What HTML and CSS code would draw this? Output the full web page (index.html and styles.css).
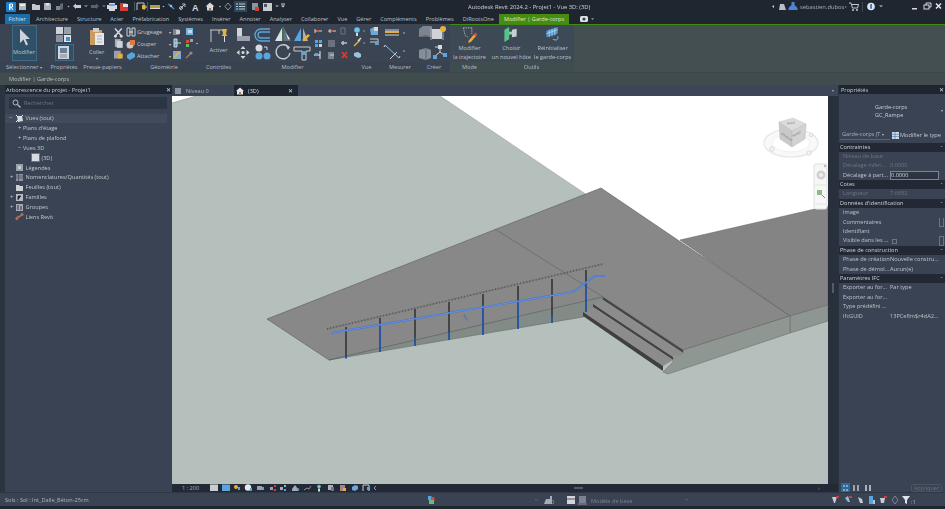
FILE: index.html
```html
<!DOCTYPE html>
<html lang="fr">
<head>
<meta charset="utf-8">
<title>Autodesk Revit 2024.2</title>
<link rel="stylesheet" href="styles.css">
</head>
<body>
<div class="app">
  <header class="titlebar">
    <svg class="qa" viewBox="0 0 300 14" width="300" height="14">
      <rect x="6" y="2" width="10" height="10" rx="1" fill="#1a7fd0"/><rect x="9" y="4" width="1.5" height="6" fill="#fff"/><path d="M10 4h2.5v3H10M11 7l2 3" stroke="#fff" fill="none"/>
      <rect x="19" y="3" width="7" height="7" fill="#aeb5bd"/><rect x="20" y="4" width="5" height="2" fill="#e8ebee"/>
      <path d="M32 4h3l1 1h4v5h-8z" fill="#c3c8cd"/>
      <path d="M44 3h6l1 1v6h-7z" fill="#aab0b8"/><rect x="46" y="3" width="3" height="2.5" fill="#e2e5e8"/>
      <path d="M56 6h4v4h-4z" fill="#7e858e"/><path d="M60 4l3-1v6l-3 1z" fill="#636a74"/><circle cx="68.500" cy="6.500" r=".8" fill="#bbb"/>
      <path d="M73 6l3-2.500v1.500h5v3h-5v1z" fill="#c8ccd2"/><path d="M84 5.500l2 1.500 2-1.500z" fill="#aab"/>
      <path d="M99 6l-3-2.500v1.500h-5v3h5v1z" fill="#596170"/><path d="M102 5.500l2 1.500 2-1.500z" fill="#889"/>
      <path d="M109 3h6v2h2v4h-2v2h-6v-2h-2v-4h2z" fill="#d5d9de"/><rect x="109" y="4" width="6" height="2" fill="#6aa9d8"/>
      <path d="M120 3h6l2 2v6h-8z" fill="#d33e34"/><path d="M123 4h5v3h-5z" fill="#e4e7ea"/>
      <path d="M134.500 2v9" stroke="#4b5462"/>
      <path d="M137 3h7M137 3v7M144 3v7M143 6h3v2h-3z" stroke="#bfc4ca" fill="none"/><rect x="142" y="5" width="3" height="4" fill="#e8b13a"/>
      <path d="M147.500 2v9" stroke="#4b5462"/>
      <rect x="150" y="5" width="10" height="3" fill="#b69a45"/><rect x="150" y="8" width="10" height="1" fill="#d7dbe0"/><circle cx="163.500" cy="6.500" r=".8" fill="#bbb"/>
      <path d="M168 4l3 2 3 3" stroke="#3f93d4" stroke-width="1.400" fill="none"/><circle cx="171" cy="6" r="1.200" fill="#9bc6e8"/>
      <path d="M180 9l5-5M182 4h3v3" stroke="#b5bac1" fill="none"/><circle cx="181" cy="8" r="1.500" fill="none" stroke="#b5bac1"/>
      <text x="192" y="10.500" class="qa-a">A</text>
      <path d="M205.500 6.500l4.500-4 4.500 4h-1.500v4h-6v-4z" fill="#d7dade"/><rect x="209" y="8" width="2" height="2.500" fill="#9a7a44"/><circle cx="220" cy="6.500" r=".8" fill="#bbb"/>
      <path d="M228 3l3 3.500-3 3.500-3-3.500z" fill="none" stroke="#8d949e"/>
      <rect x="234" y="1" width="13" height="11" fill="#2d475c"/><path d="M236 4h2M239 4h6M236 6.500h2M239 6.500h6M236 9h2M239 9h6" stroke="#c9ced4"/>
      <path d="M252 3h6v7h-6z" fill="#8d949e"/><rect x="255" y="7" width="4" height="4" fill="#d33e34"/>
      <rect x="263" y="3" width="9" height="8" fill="#c7ccd2"/><rect x="264" y="4" width="3" height="3" fill="#4e5664"/><path d="M275 5.500l2 1.500 2-1.500z" fill="#bbb"/>
      <path d="M281 5.500h4l-2 2z" fill="#d4d8dc"/><rect x="281" y="3.500" width="4" height="1" fill="#d4d8dc"/>
    </svg>
    <span class="app-title">Autodesk Revit 2024.2 - Projet1 - Vue 3D: (3D)</span>
    <div class="account">
      <svg viewBox="0 0 30 14" width="30" height="14"><path d="M2 6.500l2-1.500v3z" fill="#c9ced4"/><path d="M10 4h2.500v6H9zM14 4h-1.500v6H16z" fill="#b9bfc6"/><path d="M21.500 2h3v3l1 1 2 2v2h-9v-2l2-2 1-1z" fill="#4f83d8"/></svg>
      <span class="user">sebastien.dubos</span><span class="star">▾</span>
      <svg viewBox="0 0 14 14" width="14" height="14"><path d="M2 3h2l1.500 5h5l1-3.500H5" fill="none" stroke="#c3c9d0"/><circle cx="6" cy="10" r="1" fill="#c3c9d0"/><circle cx="10" cy="10" r="1" fill="#c3c9d0"/></svg>
      <svg class="help" viewBox="0 0 26 14" width="26" height="14"><path d="M.5 2v10" stroke="#3d4654"/><circle cx="9" cy="6.500" r="3.800" fill="#dfe5ec"/><rect x="8.200" y="4" width="1.700" height="4.700" fill="#2a6fb6"/><path d="M17 5.500l2 1.500 2-1.500z" fill="#c3c9d0"/></svg>
      <svg class="winctl" viewBox="0 0 40 14" width="40" height="14"><rect x="3" y="8" width="5" height="1.500" fill="#d4d8dd"/><rect x="15" y="5" width="5" height="4" fill="none" stroke="#d4d8dd"/><path d="M17 5V3h5v4h-2" fill="none" stroke="#d4d8dd"/><path d="M27 3.500l5 5M32 3.500l-5 5" stroke="#e4e7ea" stroke-width="1.500"/></svg>
    </div>
  </header>

  <nav class="tabs">
    <span class="tab tab-file">Fichier</span>
    <span class="tab">Architecture</span>
    <span class="tab">Structure</span>
    <span class="tab">Acier</span>
    <span class="tab">Préfabrication</span>
    <span class="tab">Systèmes</span>
    <span class="tab">Insérer</span>
    <span class="tab">Annoter</span>
    <span class="tab">Analyser</span>
    <span class="tab">Collaborer</span>
    <span class="tab">Vue</span>
    <span class="tab">Gérer</span>
    <span class="tab">Compléments</span>
    <span class="tab">Problèmes</span>
    <span class="tab">DiRootsOne</span>
    <span class="tab tab-context">Modifier | Garde-corps</span>
    <svg class="tab-video" viewBox="0 0 16 8" width="16" height="8"><rect x="1" y="1" width="8" height="6" rx="1.500" fill="#dfe3e8"/><circle cx="5" cy="4" r="1.600" fill="#39424f"/><path d="M12 3.500l1.500 1.200 1.500-1.200z" fill="#c9ced4"/></svg>
  </nav>

  <section class="ribbon">
    <div class="panel w-select">
      <div class="panel-body center">
        <div class="big-btn selected">
          <svg viewBox="0 0 14 20" width="14" height="20"><path d="M3 2v14l3.500-3.500 2.500 6 2-1-2.500-5.500H13z" fill="#cfd4da"/></svg>
          <span>Modifier</span>
        </div>
      </div>
      <div class="panel-label">Sélectionner <span class="caret">▾</span></div>
    </div>
    <div class="panel w-props">
      <div class="panel-body stack">
        <svg viewBox="0 0 18 17" width="18" height="17"><rect x="1" y="1" width="7" height="7" fill="#d0d4d9"/><rect x="9" y="1" width="7" height="7" fill="#9aa0a9"/><rect x="1" y="9" width="7" height="7" fill="#8e949e"/><rect x="9" y="9" width="7" height="7" fill="#e0e3e7"/><rect x="11" y="11" width="4" height="4" fill="#4a8cc0"/></svg>
        <div class="prop-btn"><svg viewBox="0 0 14 15" width="14" height="15"><rect x="1" y="1" width="11" height="13" fill="#d2d6db"/><rect x="3" y="3" width="7" height="5" fill="#6c8198"/><path d="M3 10h7M3 12h7" stroke="#7b8390"/></svg></div>
      </div>
      <div class="panel-label">Propriétés</div>
    </div>
    <div class="panel w-clip">
      <div class="panel-body clip">
        <div class="big-btn">
          <svg viewBox="0 0 18 20" width="18" height="20"><rect x="2" y="3" width="12" height="15" fill="#c99c63"/><rect x="5" y="1" width="6" height="4" fill="#c9ced4"/><path d="M7 6h9v12H7z" fill="#e5e7ea"/><path d="M9 9h5M9 12h5M9 15h5" stroke="#aab0b8"/></svg>
          <span>Coller</span>
          <span class="caret">▾</span>
        </div>
        <svg viewBox="110 24 12 38" width="12" height="38"><path d="M112 28l7 8M119 28l-7 8" stroke="#d5d9de" stroke-width="1.500"/><circle cx="112.500" cy="36" r="1.500" fill="#d5d9de"/><circle cx="118.500" cy="36" r="1.500" fill="#d5d9de"/><rect x="112" y="39" width="6" height="8" fill="#aab0b8"/><rect x="114" y="41" width="6" height="7" fill="#cfd3d8"/><rect x="111" y="51" width="7" height="8" fill="#9aa1ab"/><rect x="115" y="54" width="5" height="5" fill="#e0b040"/></svg>
      </div>
      <div class="panel-label">Presse-papiers</div>
    </div>
    <div class="panel w-geo">
      <div class="panel-body geo">
        <div class="geo-list">
          <div class="geo-row"><svg viewBox="0 0 10 10" width="10" height="10"><path d="M1 1h3v8H1zM6 1h3v8H6z" fill="none" stroke="#c8cdd3"/><path d="M3 5h4" stroke="#e3e6e9"/></svg><span>Grugeage</span><i>▾</i></div>
          <div class="geo-row"><svg viewBox="0 0 10 10" width="10" height="10"><circle cx="4" cy="6" r="3.500" fill="#c4c9cf"/><rect x="4" y="1" width="5" height="5" fill="#e07a42"/></svg><span>Couper</span><i>▾</i></div>
          <div class="geo-row"><svg viewBox="0 0 10 10" width="10" height="10"><path d="M1 4l5-3 3 2v3l-5 3-3-2z" fill="#5aa2dc"/></svg><span>Attacher</span><i>▾</i></div>
        </div>
        <svg viewBox="171 24 30 38" width="30" height="38"><rect x="173" y="29" width="6" height="6" fill="#7d8490"/><rect x="176" y="30" width="4" height="4" fill="#c9ced4"/><rect x="186" y="28" width="7" height="7" fill="#6eb6e2"/><rect x="188" y="30" width="4" height="3" fill="#cfd8df"/><path d="M174 39h3v8h-3zM174 43h7" fill="#5ba5da" stroke="#cfd4da"/><rect x="186" y="40" width="3" height="3" fill="#d94a3c"/><rect x="190" y="39" width="3" height="3" fill="#9aa2ac"/><rect x="186" y="44" width="3" height="3" fill="#5fbf60"/><circle cx="197" cy="43.500" r=".8" fill="#c0c5cb"/><rect x="173" y="51" width="8" height="8" fill="#7fa9cd"/><path d="M174 58l5-6" stroke="#e8b13a" stroke-width="1.500"/><path d="M186 58l5-5" stroke="#a6795c" stroke-width="1.500"/><circle cx="191" cy="53" r="1.500" fill="#8c9097"/></svg>
      </div>
      <div class="panel-label">Géométrie</div>
    </div>
    <div class="panel w-ctrl">
      <div class="panel-body center">
        <div class="big-btn">
          <svg viewBox="0 0 20 18" width="20" height="18"><path d="M1 3h16M2 3v12M10 3v4" stroke="#c1c6cc" fill="none"/><path d="M13 2h5l-1 5 1.500 2h-6L14 7z" fill="#e8b13a"/><path d="M15.500 9v6" stroke="#d9dcdf"/></svg>
          <span>Activer</span>
        </div>
      </div>
      <div class="panel-label">Contrôles</div>
    </div>
    <div class="panel w-mod">
      <div class="panel-body">
        <svg viewBox="234 24 117 38" width="117" height="38">
          <path d="M237 28h5v8h8v5h-13z" fill="#cfd4da"/><rect x="237" y="36" width="13" height="5" fill="#9ba2ac"/>
          <path d="M270 29h-9a6 6 0 0 0 0 12h9M270 32h-9a3 3 0 0 0 0 6h9" fill="none" stroke="#5aa6dc" stroke-width="1.300"/>
          <path d="M283 27v14" stroke="#4f9c4a"/><path d="M282 28v13h-7z" fill="#dde1e5"/><path d="M284 28v13h7z" fill="#66717f"/><path d="M286 33l4 6-2 .5z" fill="#eaecee"/>
          <path d="M301 28v13h-7z" fill="#5aa6dc"/><path d="M303 28v13h5z" fill="#a9b0ba"/><path d="M302 40l6-6 2 1.500-6 6z" fill="#e8b13a"/>
          <path d="M243 46l2.500 3h-5zM243 59l2.500-3h-5zM236.500 52.500l3-2.500v5zM249.500 52.500l-3-2.500v5z" fill="#d6dade"/><circle cx="243" cy="52.500" r="1.500" fill="#d6dade"/>
          <circle cx="259" cy="48" r="3.500" fill="#d6dade"/><circle cx="259" cy="56" r="3.500" fill="#5aa6dc"/><circle cx="267" cy="56" r="3.500" fill="#5aa6dc"/><path d="M264 47h3v3" stroke="#d6dade" fill="none"/>
          <path d="M289 48a7 7 0 1 0 1 5" fill="none" stroke="#c5cad0" stroke-width="1.400"/><path d="M286 46l4 1-2 3z" fill="#c5cad0"/>
          <path d="M294 47h16v4h-4v9h-4v-9h-8z" fill="none" stroke="#c7ccd2"/><rect x="302" y="51" width="4" height="4" fill="#5aa6dc"/>
          <path d="M315 31h7M315 29v4M328 31h8M330 31v-2M330 31v2" stroke="#cfd3d8"/><circle cx="318" cy="31" r="1.300" fill="#d94a3c"/><circle cx="332" cy="31" r="1.300" fill="#d94a3c"/><path d="M341 28h4v6h-4z" fill="none" stroke="#6d7583"/>
          <rect x="315" y="40" width="3" height="3" fill="#5aa6dc"/><rect x="319" y="40" width="3" height="3" fill="#5aa6dc"/><rect x="315" y="44" width="3" height="3" fill="#5aa6dc"/><rect x="319" y="44" width="3" height="3" fill="#cfd3d8"/><rect x="328" y="40" width="7" height="7" fill="#6a727f"/><path d="M341 43h6M343 41v4" stroke="#b9bec5" stroke-width="1.500"/>
          <path d="M314 55h6M320 51v8" stroke="#c6cbd1" stroke-width="1.300"/><rect x="315" y="53" width="3" height="3" fill="#5aa6dc"/><path d="M328 52h6v7h-6z" fill="#7a828e"/><path d="M330 55h4" stroke="#cfd3d8"/><path d="M342 52l5 6M347 52l-5 6" stroke="#e2382f" stroke-width="1.800"/>
        </svg>
      </div>
      <div class="panel-label">Modifier</div>
    </div>
    <div class="panel w-view">
      <div class="panel-body">
        <svg viewBox="351 24 31 38" width="31" height="38"><circle cx="357" cy="30" r="2.800" fill="#68c5e8"/><rect x="356" y="33" width="2" height="3" fill="#d6dade"/><circle cx="364" cy="31" r=".7" fill="#bbb"/><path d="M370 29l4-2h4v8h-7z" fill="#6aa9da"/><rect x="374" y="27" width="4" height="4" fill="#d6dade"/><path d="M354 46l6-6" stroke="#e8b13a" stroke-width="1.500"/><path d="M358 41l3-3" stroke="#d6dade" stroke-width="1.500"/><circle cx="364" cy="43" r=".7" fill="#bbb"/><path d="M370 39h8v6M370 42h5" stroke="#c6cbd1" fill="none"/><rect x="375" y="41" width="3" height="4" fill="#5aa6dc"/><path d="M354 53l4-1 3 2v3l-3 1-4-2z" fill="#9cc2df"/></svg>
      </div>
      <div class="panel-label">Vue</div>
    </div>
    <div class="panel w-meas">
      <div class="panel-body">
        <svg viewBox="382 24 36 38" width="36" height="38"><rect x="385" y="31" width="14" height="2" fill="#e0b040"/><path d="M385 30h14M385 35h14" stroke="#cfd3d8"/><circle cx="404" cy="33" r=".8" fill="#c0c5cb"/><path d="M385 45l14 13" stroke="#88bfe5"/><path d="M385 45l-1 2M399 58l1-2M390 59l7-7" stroke="#c9ced4"/><circle cx="404" cy="51" r=".8" fill="#c0c5cb"/></svg>
      </div>
      <div class="panel-label">Mesurer</div>
    </div>
    <div class="panel w-create">
      <div class="panel-body">
        <svg viewBox="418 24 32 38" width="32" height="38"><path d="M413 38v-8l4-3h9v11z" transform="translate(6 -1)" fill="#7d8490"/><path d="M419 37l6-2 4 1v1z" fill="#5f6772"/><rect x="432" y="29" width="10" height="10" fill="#cfd3d8"/><path d="M431 28v12M443 28v12" stroke="#aeb4bc"/><circle cx="443" cy="29" r="3" fill="#e8b13a"/><path d="M419 50l7-2 5 2v8l-5 2-7-2z" fill="#868d97"/><path d="M426 48v12" stroke="#5d6570"/><path d="M435 47h5M440 49v3M440 52l-5 4M440 52l5 4" stroke="#cdd2d8" fill="none"/><rect x="438" y="45" width="4" height="4" fill="#d6dade"/><rect x="433" y="55" width="4" height="4" fill="#5aa6dc"/><rect x="443" y="53" width="4" height="4" fill="#5aa6dc"/></svg>
      </div>
      <div class="panel-label">Créer</div>
    </div>
    <div class="contextual">
      <div class="panel w-mode">
        <div class="panel-body center">
          <div class="big-btn two">
            <svg viewBox="0 0 18 18" width="18" height="18"><path d="M3 2h9M12 2v7M3 2l2 8 3 2" fill="none" stroke="#aeb4bc" stroke-dasharray="1.500 1"/><path d="M9 15l6-7 2 2-6 7-3 1z" fill="#e8a83a"/><path d="M14 9l2-2 2 2-2 2z" fill="#d84a3c"/></svg>
            <span>Modifier</span><span>la trajectoire</span>
          </div>
        </div>
        <div class="panel-label">Mode</div>
      </div>
      <div class="panel w-tools">
        <div class="panel-body tools">
          <div class="big-btn two">
            <svg viewBox="0 0 18 18" width="18" height="18"><path d="M2 4l5-3v13l-5 3z" fill="#54c48a"/><rect x="7" y="6" width="3" height="3" fill="#9fd7b8"/><path d="M10 4l5-1v8l-5 1z" fill="#c9ced4"/></svg>
            <span>Choisir</span><span>un nouvel hôte</span>
          </div>
          <div class="big-btn two">
            <svg viewBox="0 0 18 18" width="18" height="18"><path d="M2 5l12-4v7L2 12z" fill="#4c94d2"/><path d="M5 4v8M8 3v8M11 2v8M2 8l12-4" stroke="#bcdcf2" stroke-width=".8"/><path d="M9 14c4 2 6 0 5-3" fill="none" stroke="#8dc5ea"/></svg>
            <span>Réinitialiser</span><span>le garde-corps</span>
          </div>
        </div>
        <div class="panel-label">Outils</div>
      </div>
      <div class="context-rest"></div>
    </div>
  </section>

  <div class="context-bar">Modifier | Garde-corps</div>

  <main class="workspace">
    <div class="gutter"></div>
    <aside class="browser">
      <div class="dock-head"><span>Arborescence du projet - Projet1</span><b class="x">✕</b></div>
      <div class="search"><svg viewBox="0 0 9 9" width="9" height="9"><circle cx="3.500" cy="3.500" r="2.500" fill="none" stroke="#b9bfc7" stroke-width="1"/><path d="M5.500 5.500l3 3" stroke="#b9bfc7" stroke-width="1.300"/></svg><span>Rechercher</span></div>
      <ul class="tree">
        <li class="row row-sel"><i class="exp">−</i><svg class="ti" viewBox="0 0 9 9"><path d="M2 2l5 0 1 5-5 1z" fill="#d6dade"/><path d="M1 1l2 2M8 1L6 3M1 8l2-2" stroke="#f0f1f3"/></svg>Vues (tout)</li>
        <li class="row lvl2"><i class="exp">+</i>Plans d'étage</li>
        <li class="row lvl2"><i class="exp">+</i>Plans de plafond</li>
        <li class="row lvl2"><i class="exp">−</i>Vues 3D</li>
        <li class="row lvl3"><svg class="ti" viewBox="0 0 9 9"><rect x="1" y="1" width="7" height="7" fill="#d8dbdf"/><rect x=".5" y=".5" width="8" height="8" fill="none" stroke="#6d7583"/></svg>(3D)</li>
        <li class="row"><i class="exp"></i><svg class="ti" viewBox="0 0 9 9"><rect x="1" y="1" width="7" height="7" fill="#9aa1ab"/><rect x="3" y="3" width="3" height="3" fill="#c6cbd1"/></svg>Légendes</li>
        <li class="row"><i class="exp">+</i><svg class="ti" viewBox="0 0 9 9"><rect x="1" y="1" width="7" height="7" fill="#8d949e"/><path d="M1 3h7M1 5h7M3.500 1v7" stroke="#39424f" stroke-width=".6"/></svg>Nomenclatures/Quantités (tout)</li>
        <li class="row"><i class="exp"></i><svg class="ti" viewBox="0 0 9 9"><path d="M1 2h3l1 1h3v5H1z" fill="#cdd1d6"/></svg>Feuilles (tout)</li>
        <li class="row"><i class="exp">+</i><svg class="ti" viewBox="0 0 9 9"><rect x="1" y="1" width="7" height="7" fill="#b5bac1"/><path d="M3 7V3h3" stroke="#39424f"/></svg>Familles</li>
        <li class="row"><i class="exp">+</i><svg class="ti" viewBox="0 0 9 9"><rect x="1" y="1" width="7" height="7" fill="#a5abb4"/><path d="M3 2v5M6 3v4" stroke="#2f3744"/></svg>Groupes</li>
        <li class="row"><i class="exp"></i><svg class="ti" viewBox="0 0 9 9"><path d="M1 7l3-3M4 5l4-3" stroke="#b47a58" stroke-width="1.400"/><circle cx="2" cy="6.500" r="1.300" fill="none" stroke="#b47a58" stroke-width=".7"/><circle cx="7" cy="2.500" r="1.300" fill="none" stroke="#b47a58" stroke-width=".7"/></svg>Liens Revit</li>
      </ul>
    </aside>

    <section class="center-col">
      <div class="doc-tabs">
        <div class="doc-tab"><svg viewBox="0 0 8 8" width="8" height="8"><rect x="1" y="1" width="6" height="6" fill="#8d949e"/></svg>Niveau 0</div>
        <div class="doc-tab active"><svg viewBox="0 0 8 8" width="8" height="8"><path d="M0 4l4-3.500L8 4H7v3.500H1V4z" fill="#e4e6e9"/><rect x="3" y="5" width="2" height="2.500" fill="#a58552"/></svg>(3D)<b class="x">✕</b></div>
        <span class="doc-tabs-fill"></span>
        <span class="doc-menu">▾</span>
      </div>
      <div class="view-row">
        <div class="canvas">
          <svg class="scene" viewBox="172 96 656 388" width="656" height="388">
            <rect x="172" y="96" width="656" height="388" fill="#fff"/>
            <polygon points="172,103 196,96 440,96 600,204 828,320 828,484 172,484" fill="#b5bfbb"/>
            <path d="M172 103l24-7M440 96L590 197" stroke="#8f9894" stroke-width=".6" fill="none"/>
            <polygon points="680,240 828,206 828,305 790,316" fill="#848484" stroke="#5d5d5d" stroke-width=".5"/>
            <polygon points="790,316 828,305 828,321 790,333" fill="#8e9691" stroke="#666" stroke-width=".5"/>
            <polygon points="267,319 601,188 790,316 683,350 603,297 329,360" fill="#888" stroke="#5b5b5b" stroke-width=".6"/>
            <polygon points="329,360 603,297 603,303 583,317" fill="#838b87" stroke="#5d6360" stroke-width=".5"/>
            <polygon points="683,350 790,316 790,333 668,374 663,372 673,362 673,358 683,353" fill="#8f9792" stroke="#666" stroke-width=".5"/>
            <path d="M495 229L603 297" stroke="#606060" stroke-width=".6"/>
            <polygon points="603,297 683,350 683,353 603,300" fill="#454545"/>
            <polygon points="603,300 593,304 673,357 683,353" fill="#8c8c8c"/>
            <polygon points="593,304 673,357 673,360 593,307" fill="#434343"/>
            <polygon points="593,307 583,312 663,366 673,360" fill="#8c8c8c"/>
            <polygon points="583,312 663,366 663,371 583,316" fill="#3f3f3f"/>
            <path d="M327 329L603 264" stroke="#4a4a4a" stroke-width="2" stroke-dasharray="1 2.200" opacity=".8"/>
            <path d="M327 329L603 264" stroke="#666" stroke-width=".5"/>
            <g stroke="#222" stroke-width="1.300">
              <path d="M346 327v31M380 318v34M415 309v37M449 302v38M483 294v41M518 286v43M552 279v44M586 270v42"/>
            </g>
            <g stroke="#1f5fd0" stroke-width="1.300">
              <path d="M346 356v3M380 324v28M415 338v8M449 332v8M483 305v30M518 301v28M552 316v7M586 283v29"/>
            </g>
            <path d="M331 333L573 292L595 276H605" fill="none" stroke="#3f72d2" stroke-width="1.800"/>
            <path d="M331 333L573 292L595 276H605" fill="none" stroke="#93b2e8" stroke-width=".5"/>
            <path d="M464 315l3 5" stroke="#3f6fc0" stroke-width="1.600" stroke-dasharray="1.600 .8"/>
            <ellipse cx="791" cy="143" rx="27" ry="14" fill="#f9f9f9" stroke="#e6e6e6" stroke-width="1.200"/>
            <ellipse cx="791" cy="143" rx="19" ry="9" fill="#fff" stroke="#f0f0f0"/>
            <circle cx="772" cy="149" r="2.200" fill="#f4f4f4" stroke="#dadada"/><circle cx="809" cy="153" r="2.200" fill="#f4f4f4" stroke="#dadada"/><circle cx="811" cy="135" r="1.800" fill="#f4f4f4" stroke="#dadada"/>
            <polygon points="779,122 793,118 806,124 792,131" fill="#dcdcdc" stroke="#c8c8c8" stroke-width=".5"/>
            <polygon points="779,122 792,131 792,147 780,139" fill="#c9c9c9" stroke="#bbb" stroke-width=".5"/>
            <polygon points="792,131 806,124 805,139 792,147" fill="#d3d3d3" stroke="#bbb" stroke-width=".5"/>
            <text class="cube-t" x="787" y="124" transform="rotate(-3 792 124)">HAUT</text>
            <text class="cube-t" x="781" y="134" transform="rotate(35 781 134)">GAUCHE</text>
            <text class="cube-t" x="793" y="137" transform="rotate(-28 793 137)">AVANT</text>
            <rect x="814" y="164" width="13" height="45" rx="2" fill="#f6f7f6" stroke="#dde1de"/>
            <circle cx="821" cy="175" r="4.500" fill="#cfd2d0"/><circle cx="821" cy="175" r="2" fill="#eee"/><circle cx="825" cy="166" r="1.200" fill="#bbb"/><path d="M815 185h11M815 204h11" stroke="#e2e5e2"/>
            <rect x="817" y="190" width="5" height="5" fill="#8fbb8a"/><path d="M822 195l3 3" stroke="#888"/>
          </svg>
        </div>
        <div class="vscroll"><span class="arrow">︿</span><span class="thumb"></span></div>
      </div>
      <div class="view-bar">
        <span class="scale">1 : 200</span>
        <svg viewBox="207 0 172 8" width="172" height="8" class="view-icons">
          <rect x="210" y="0.500" width="8" height="6.500" fill="#c9ced4"/><rect x="222" y="0.500" width="8" height="6.500" fill="#5aa6dc"/>
          <circle cx="236" cy="3" r="2" fill="#e8b13a"/><rect x="238" y="3" width="2" height="3" fill="#5aa6dc"/>
          <circle cx="248" cy="3.500" r="3.200" fill="#e6e8ea"/><rect x="250" y="4" width="2" height="3" fill="#5aa6dc"/>
          <path d="M257 2h5v4h-5z" fill="#9aa1ab"/><rect x="262" y="3" width="2" height="3" fill="#5aa6dc"/>
          <path d="M270 6V3h3v3z" fill="#9aa1ab"/><rect x="274" y="1" width="2" height="2" fill="#d33e34"/><rect x="274" y="5" width="2" height="2" fill="#d33e34"/>
          <path d="M280 6V3h3v3zM284 1h2v2h-2z" fill="#8fb3d0"/><rect x="284" y="5" width="2" height="2" fill="#5aa6dc"/>
          <path d="M292 5l3-4 3 4v2h-6z" fill="#a5abb4"/><circle cx="298" cy="5.500" r="1.200" fill="#5aa6dc"/>
          <path d="M304 6l3-2 2 1 2-3" stroke="#8d949e" fill="none"/>
          <circle cx="319" cy="2.500" r="1.800" fill="#68c5e8"/><rect x="318" y="4.500" width="2" height="3" fill="#d6dade"/>
          <rect x="328" y="1" width="5" height="5" fill="#aab0b8"/><rect x="331" y="3" width="3" height="4" fill="#6d7583"/>
          <rect x="340" y="1" width="5" height="6" fill="#a8818a"/><rect x="343" y="4" width="3" height="3" fill="#e8b13a"/>
          <path d="M352 3l3-2 3 1v3l-3 2-3-1z" fill="#6aa9da"/>
          <path d="M363 1h6v2M363 1v6M369 4v3" stroke="#c6cbd1" fill="none"/><rect x="367" y="3" width="3" height="3" fill="#5aa6dc"/>
          <path d="M376 2l-2 2 2 2" stroke="#9099a5" fill="none"/>
        </svg>
        <span class="hfill"><span class="hthumb"></span></span>
        <span class="chev">›</span>
      </div>
    </section>

    <aside class="props">
      <div class="dock-head"><span>Propriétés</span><b class="x">✕</b></div>
      <div class="type-sel"><div class="type-name"><span>Garde-corps</span><span>GC_Rampe</span></div><i class="caret">▾</i></div>
      <div class="type-row"><span class="type-drop">Garde-corps (T <i class="caret">▾</i></span><svg viewBox="0 0 7 7" width="7" height="7"><rect width="7" height="7" fill="#d8dce0"/><path d="M0 2.300h7M0 4.600h7M3 0v7" stroke="#4a7fb0" stroke-width=".7"/></svg><span>Modifier le type</span></div>
      <div class="grid">
        <div class="sec">Contraintes<i>⌃</i></div>
        <div class="prop dim"><span>Niveau de base</span><span></span></div>
        <div class="prop dim"><span>Décalage inféri...</span><span>0.0000</span></div>
        <div class="prop"><span>Décalage à part...</span><span class="input">0.0000</span></div>
        <div class="sec">Cotes<i>⌃</i></div>
        <div class="prop dim"><span>Longueur</span><span>7.6682</span></div>
        <div class="sec">Données d'identification<i>⌃</i></div>
        <div class="prop"><span>Image</span><span></span></div>
        <div class="prop"><span>Commentaires</span><span class="tail"></span></div>
        <div class="prop"><span>Identifiant</span><span></span></div>
        <div class="prop"><span>Visible dans les ...</span><span class="tail"><u class="check"></u></span></div>
        <div class="sec">Phase de construction<i>⌃</i></div>
        <div class="prop"><span>Phase de création</span><span>Nouvelle constru...</span></div>
        <div class="prop"><span>Phase de démol...</span><span>Aucun(e)</span></div>
        <div class="sec">Paramètres IFC<i>⌃</i></div>
        <div class="prop"><span>Exporter au for...</span><span>Par type</span></div>
        <div class="prop"><span>Exporter au for...</span><span></span></div>
        <div class="prop"><span>Type prédéfini ...</span><span></span></div>
        <div class="prop"><span>IfcGUID</span><span>13PCefIm$r4dA2...</span></div>
      </div>
      <div class="props-foot">
        <svg viewBox="0 0 36 10" width="36" height="10"><rect x="2" y="0" width="9" height="10" fill="#2a6d9c"/><path d="M4 3h2M7 3h2M4 7h2M7 7h2" stroke="#d6e4ee"/><path d="M15 2v6M19 2v6" stroke="#bcc2c9" stroke-width="1.500"/><path d="M26 2h2v6h-2zM30 2h2v6h-2z" fill="#a9b0b9"/></svg>
        <span class="apply">Appliquer</span>
      </div>
    </aside>
  </main>

  <footer class="status">
    <span class="st-text">Sols : Sol : Int_Dalle_Béton-25cm</span>
    <svg class="st-icons" viewBox="425 0 490 12" width="490" height="12">
      <rect x="428" y="2" width="3.500" height="4" fill="#5aa6dc"/><rect x="431.500" y="3" width="3" height="4" fill="#d94a3c"/><rect x="429" y="6" width="5" height="4" fill="#5fbf80"/>
      <path d="M535 5l1.500 1.500L538 5" stroke="#5d6674" fill="none"/>
      <path d="M544 10l2-5h4V2h2v8z" fill="#a6acb5"/><text x="551" y="10" class="st-small">0</text>
      <rect x="567" y="2" width="8" height="8" fill="#d2d6db"/><path d="M567 5h8" stroke="#555"/>
      <rect x="579" y="2" width="7" height="7" fill="#7c838e"/><path d="M578 10h9" stroke="#8d949e"/>
      <text x="591" y="8.500" class="st-model">Modèle de base</text>
      <path d="M685 5l1.500 1.500L688 5" stroke="#5d6674" fill="none"/>
      <path d="M832 3h5l-2 6h-1z" fill="#c6cbd1"/><rect x="836" y="2" width="3" height="2" fill="#d33e34"/>
      <path d="M845 4l3-2 2 6h-2z" fill="#9bb9d2"/><rect x="849" y="2" width="3" height="2" fill="#d33e34"/>
      <path d="M858 3l4 2 1 4h-3z" fill="#c6cbd1"/>
      <rect x="869" y="2" width="4" height="8" fill="#5aa6dc"/><rect x="873" y="6" width="2" height="4" fill="#a4c8e4"/>
      <path d="M880 4h5l-1 5h-3z" fill="#c6cbd1"/><rect x="884" y="2" width="3" height="2" fill="#d33e34"/>
      <path d="M895 2l3 4-3 4-3-4z" fill="none" stroke="#7a8390"/>
      <path d="M902 2h8l-3 4v4l-2-1V6z" fill="#dfe3e7"/><text x="911" y="9.500" class="st-small">:1</text>
    </svg>
  </footer>
  <div class="strip"></div>
</div>
</body>
</html>
```
FILE: styles.css
```css
* { box-sizing: border-box; margin: 0; padding: 0; }
html, body { width: 945px; height: 509px; overflow: hidden; background: #222a35; }
body { font-family: "Open Sans", "Liberation Sans", sans-serif; font-size: 5.6px; color: #c5cad1; }
.app { width: 945px; height: 509px; display: flex; flex-direction: column; filter: blur(.45px); }

.titlebar { height: 14px; background: #1f2630; display: flex; align-items: center; flex: none; }
.qa { flex: none; }
.qa-a { font-size: 9px; font-weight: 600; fill: #d5d9de; font-family: "Liberation Sans", sans-serif; }
.app-title { margin-left: 168px; width: 303px; flex: none; font-size: 5.8px; color: #cfd3d8; }
.account { display: flex; align-items: center; flex: 1; margin-left: -1px; }
.user { color: #aab0b8; font-size: 5.8px; margin-left: 0; width: 45px; flex: none; white-space: nowrap; }
.star { color: #aab0b8; font-size: 3px; width: 2px; }
.help { margin-left: 1px; }
.winctl { margin-left: 21px; }

.tabs { height: 10px; background: #1f2630; display: flex; align-items: center; padding-left: 5px; flex: none; }
.tab { padding: 0 4.5px; line-height: 10px; height: 10px; color: #bcc2c9; white-space: nowrap; }
.tab-file { background: #1c6fa6; color: #d8e4ec; width: 25px; padding: 0 3.5px; margin-right: 1.5px; }
.tab-context { background: #478c10; color: #dfe8d6; margin-left: 1px; }
.tab-video { margin-left: 10px; }

.ribbon { height: 48px; display: flex; background: #3b4453; flex: none; }
.panel { height: 48px; display: flex; flex-direction: column; flex: none; }
.panel-body { height: 38px; display: flex; flex: none; }
.panel-label { height: 10px; line-height: 11px; text-align: center; color: #b7bdc5; white-space: nowrap; background: #394250; }
.caret { font-size: 4px; color: #b7bdc5; font-style: normal; }
.center { justify-content: center; }
.w-select { width: 48px; }
.w-props { width: 32px; }
.w-clip { width: 45px; }
.w-geo { width: 78px; }
.w-ctrl { width: 31px; }
.w-mod { width: 117px; }
.w-view { width: 31px; }
.w-meas { width: 36px; }
.w-create { width: 32px; }
.w-mode { width: 39px; }
.w-tools { width: 85px; }

.big-btn { display: flex; flex-direction: column; align-items: center; padding-top: 3px; line-height: 9px; text-align: center; color: #bfc4cb; }
.big-btn.selected { width: 25px; background: #2f5066; border: 1px solid #3c6c8a; padding-top: 1px; height: 36px; margin-top: 1px; }
.big-btn svg { margin-bottom: 1px; }
.big-btn.two { padding-top: 1px; white-space: nowrap; }
.big-btn .caret { line-height: 4px; }
.stack { flex-direction: column; align-items: center; gap: 1px; padding-top: 2px; }
.prop-btn { width: 19px; height: 17px; background: #2f5066; border: 1px solid #3c6c8a; display: flex; align-items: center; justify-content: center; }
.clip { padding-left: 6px; gap: 6px; }
.clip .big-btn { width: 22px; }
.geo { gap: 0; }
.geo-list { width: 46px; display: flex; flex-direction: column; padding-top: 3px; gap: 2px; }
.geo-row { height: 10px; display: flex; align-items: center; gap: 1px; padding-left: 1px; }
.geo-row i { font-size: 4px; margin-left: auto; font-style: normal; }
.contextual { display: flex; flex: 1; border-top: 1px solid #3f8a10; background: #434f50; }
.contextual .panel { height: 47px; background: #3e4956; }
.contextual .panel-body { height: 37px; }
.contextual .panel-label { background: #3f4c50; }
.tools { gap: 3px; justify-content: center; }
.context-rest { flex: 1; }

.context-bar { height: 13px; flex: none; background: #404c4e; border-top: 1px solid #3b4647; padding-left: 9px; line-height: 12px; color: #b8bec2; }

.workspace { height: 407px; flex: none; display: flex; background: #3a4353; }
.gutter { width: 5px; background: #2b3340; flex: none; }
.dock-head { height: 9px; background: #1f2631; display: flex; justify-content: space-between; align-items: center; padding: 0 1px; color: #c7ccd2; }
.x { font-size: 6px; font-weight: 400; color: #d8dbdf; }

.browser { width: 167px; flex: none; background: #394353; }
.search { margin: 3px 5px 0 4px; height: 12px; background: #2c3544; display: flex; align-items: center; gap: 3px; padding-left: 3px; color: #6f7784; }
.tree { list-style: none; margin-top: 4.5px; padding-right: 5px; }
.row { height: 9.85px; display: flex; align-items: center; color: #c3c8cf; white-space: nowrap; padding-left: 4px; }
.row-sel { background: #414b5b; }
.exp { width: 7px; font-style: normal; text-align: left; color: #c3c8cf; flex: none; font-size: 6px; padding-left: 1px; }
.ti { width: 9px; height: 9px; margin: 0 1.5px 0 -1px; flex: none; }
.row-sel .exp { padding-left: 0; }
.lvl2 { padding-left: 12px; }
.lvl2 .exp { width: 6px; }
.lvl3 { padding-left: 27px; }

.center-col { width: 666px; flex: none; display: flex; flex-direction: column; }
.doc-tabs { height: 11px; display: flex; background: #3d4658; flex: none; color: #aab0b9; }
.doc-tab { width: 60px; display: flex; align-items: center; gap: 4px; padding-left: 2px; background: #3a4354; }
.doc-tab.active { width: 64px; margin-left: 2px; padding: 0 5px 0 2px; background: #1f2632; color: #d2d6db; }
.doc-tab.active .x { margin-left: auto; }
.doc-tabs-fill { flex: 1; }
.doc-menu { width: 10px; text-align: center; font-size: 4px; line-height: 11px; color: #aab0b9; }
.view-row { height: 388px; display: flex; flex: none; }
.canvas { width: 656px; height: 388px; flex: none; overflow: hidden; }
.scene { display: block; }
.cube-t { font-size: 3px; fill: #777; font-family: "Liberation Sans", sans-serif; }
.vscroll { width: 10px; background: #28303c; display: flex; flex-direction: column; align-items: center; }
.arrow { font-size: 4px; line-height: 7px; color: #9aa1ab; }
.thumb { width: 2px; height: 10px; margin-top: 180px; background: #525b69; }
.view-bar { height: 8px; background: #232a36; display: flex; align-items: center; flex: none; }
.scale { margin-left: 10px; width: 25px; color: #a9afb7; flex: none; }
.view-icons { flex: none; }
.hfill { flex: 1; display: flex; justify-content: center; padding-right: 40px; }
.hthumb { width: 9px; height: 2px; background: #525b69; }
.chev { width: 20px; color: #8d949e; flex: none; }

.props { flex: 1; background: #394353; display: flex; flex-direction: column; border-left: 1px solid #2b3340; }
.props .dock-head { padding-left: 2px; }
.type-sel { height: 33.5px; flex: none; display: flex; align-items: center; padding: 0 2px 0 36px; }
.type-name { display: flex; flex-direction: column; line-height: 8px; flex: 1; color: #c9ced4; }
.type-row { height: 15px; flex: none; display: flex; align-items: center; gap: 1.5px; padding-left: 1px; white-space: nowrap; color: #c5cad1; }
.type-drop { width: 50px; border-bottom: 1px solid #5a6472; line-height: 9px; padding-left: 2px; color: #aab0b8; }
.grid { flex: none; }
.sec { height: 9.4px; line-height: 9.4px; background: #222935; color: #cfd3d8; padding: 0 2px 0 1px; display: flex; justify-content: space-between; }
.sec i { font-style: normal; font-size: 4px; color: #c6cbd1; }
.prop { height: 9.4px; line-height: 9.4px; display: flex; color: #bfc4cb; }
.prop span { display: block; white-space: nowrap; overflow: hidden; }
.prop span:first-child { width: 51px; flex: none; padding-left: 4px; }
.prop span:last-child { flex: 1; }
.prop.dim { color: #6d7583; }
.prop .input { background: #2c3442; border: 1px solid #7d8490; line-height: 7px; height: 9px; margin-right: 6px; color: #cfd3d8; }
.prop .tail { display: flex; justify-content: space-between; align-items: center; height: 100%; padding-right: 1px; }
.prop .tail::after { content: ""; margin-left: auto; width: 3px; height: 8px; border: 1px solid #6d7583; }
.check { display: block; margin-left: 2px; width: 5px; height: 5px; border: 1px solid #6d7583; }
.props-foot { margin-top: auto; height: 9px; display: flex; align-items: center; justify-content: space-between; padding-right: 3px; }
.apply { width: 31px; height: 8px; line-height: 7px; text-align: center; border: 1px solid #4b5462; border-radius: 2px; color: #69717e; }

.status { height: 14px; flex: none; background: #394353; border-top: 1px solid #2e3643; display: flex; align-items: center; padding-left: 5px; color: #b0b6be; }
.st-text { width: 420px; flex: none; }
.st-icons { flex: none; }
.st-small { font-size: 6px; fill: #a6acb5; }
.st-model { font-size: 5.6px; fill: #7b8390; }
.strip { height: 3px; background: #20262f; flex: none; }
```
